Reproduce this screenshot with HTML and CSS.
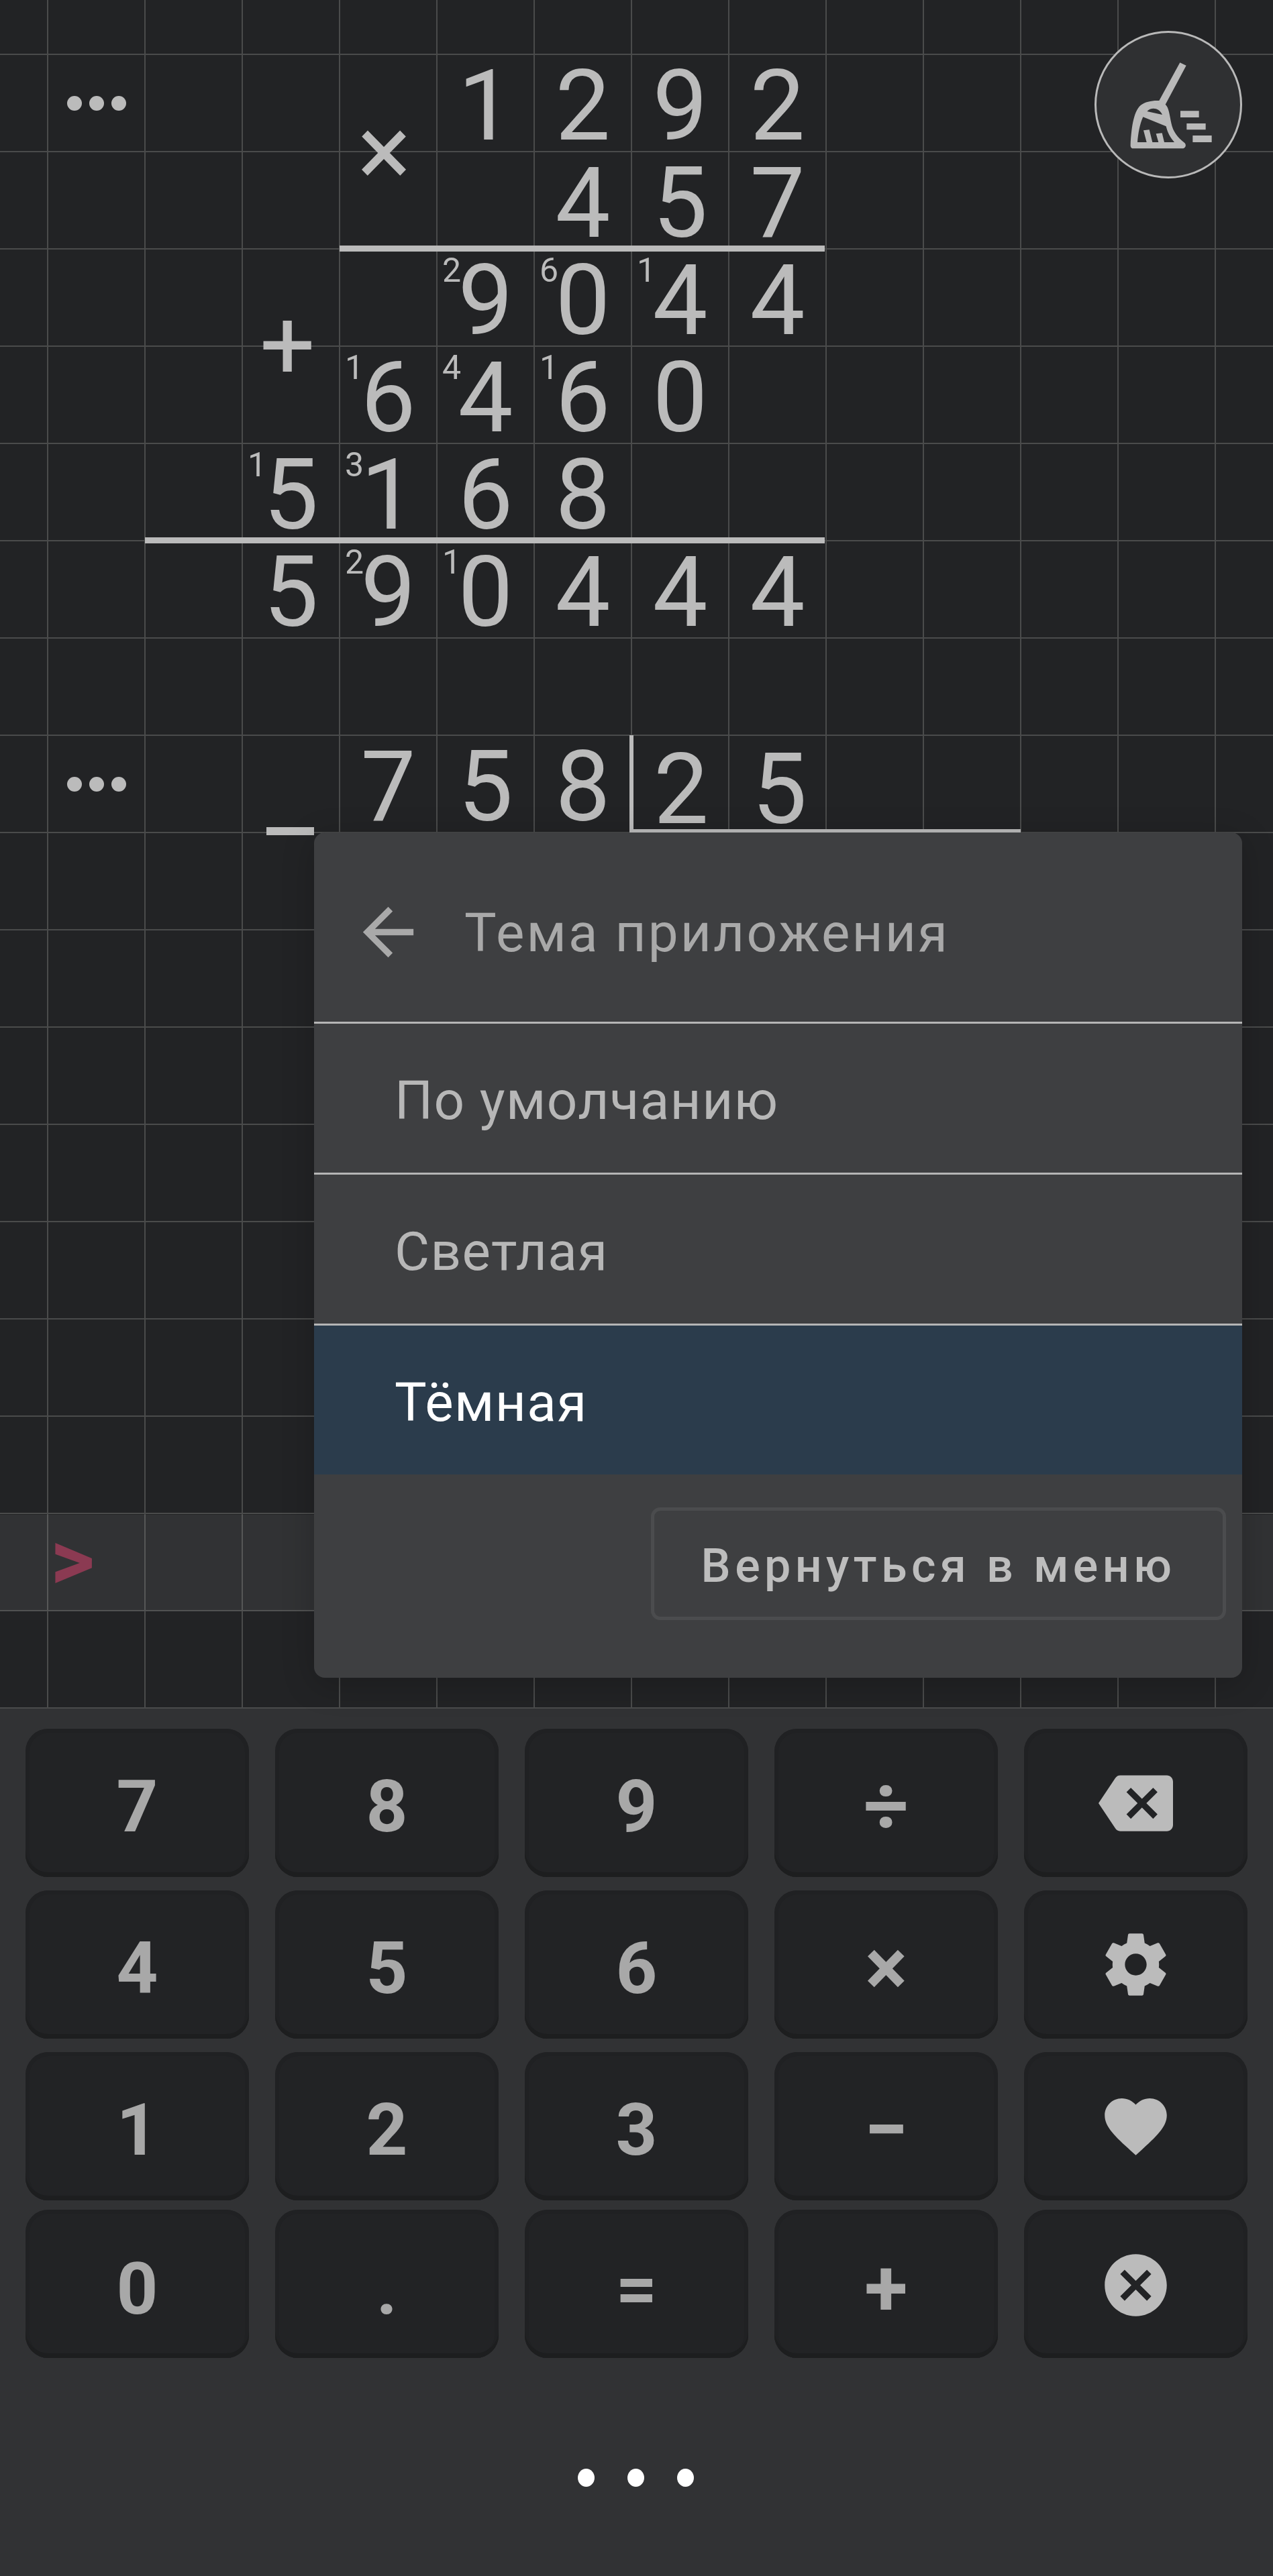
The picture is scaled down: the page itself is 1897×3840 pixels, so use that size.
FILE: index.html
```html
<!DOCTYPE html>
<html lang="en">

<head>
    <meta charset="UTF-8">
    <meta name="viewport" content="width=device-width, initial-scale=1.0">
    <title>Столбик</title>
    <link rel="stylesheet" href="styles.css">
</head>

<body>
    <div class="app">
        <div class="board">
            <span class="input-band"></span>

            <span class="more c1 r1"><i></i><i></i><i></i></span>
            <span class="sign times c4 r1">×</span>
            <span class="num c5 r1">1</span>
            <span class="num c6 r1">2</span>
            <span class="num c7 r1">9</span>
            <span class="num c8 r1">2</span>
            <span class="num c6 r2">4</span>
            <span class="num c7 r2">5</span>
            <span class="num c8 r2">7</span>
            <span class="rule rule-mul"></span>

            <span class="num c5 r3">9<sup>2</sup></span>
            <span class="num c6 r3">0<sup>6</sup></span>
            <span class="num c7 r3">4<sup>1</sup></span>
            <span class="num c8 r3">4</span>

            <span class="sign plus c3 r3">+</span>
            <span class="num c4 r4">6<sup>1</sup></span>
            <span class="num c5 r4">4<sup>4</sup></span>
            <span class="num c6 r4">6<sup>1</sup></span>
            <span class="num c7 r4">0</span>

            <span class="num c3 r5">5<sup>1</sup></span>
            <span class="num c4 r5">1<sup>3</sup></span>
            <span class="num c5 r5">6</span>
            <span class="num c6 r5">8</span>
            <span class="rule rule-add"></span>

            <span class="num c3 r6">5</span>
            <span class="num c4 r6">9<sup>2</sup></span>
            <span class="num c5 r6">0<sup>1</sup></span>
            <span class="num c6 r6">4</span>
            <span class="num c7 r6">4</span>
            <span class="num c8 r6">4</span>

            <span class="more c1 r8"><i></i><i></i><i></i></span>
            <span class="minus-mark"></span>
            <span class="num c4 r8">7</span>
            <span class="num c5 r8">5</span>
            <span class="num c6 r8">8</span>
            <span class="divisor">
                <span class="num">2</span>
                <span class="num">5</span>
            </span>

            <span class="prompt">&gt;</span>

            <button class="clean-button">
                <svg viewBox="0 0 600 570" class="broom">
                    <path fill-rule="evenodd" d="M262 270 L355 100 L383 113 L290 287 C305 300 308 330 316 370 C324 410 345 435 375 458 C386 468 380 484 365 484 L145 484 C136 484 133 476 134 465 C138 400 145 320 180 290 C200 274 235 268 262 270 Z M208 318 C225 298 262 300 276 333 Z M190 343 L293 385 C300 415 312 435 330 456 L285 456 L275 415 L248 418 L259 456 L232 456 L218 400 L192 403 L206 456 L165 456 C168 420 175 375 190 343 Z" />
                    <path d="M357 316 H440 V345 H357 Z M385 372 H470 V400 H385 Z M412 426 H497 V456 H412 Z" />
                </svg>
            </button>
        </div>

        <div class="keypad">
            <button class="key">7</button>
            <button class="key">8</button>
            <button class="key">9</button>
            <button class="key op">÷</button>
            <button class="key">
                <svg viewBox="0 0 24 24" class="key-icon icon-back">
                    <path d="M22 3H7c-.69 0-1.23.35-1.59.88L0 12l5.41 8.11c.36.53.9.89 1.59.89h15c1.1 0 2-.9 2-2V5c0-1.1-.9-2-2-2zm-3 12.59L17.59 17 14 13.41 10.41 17 9 15.59 12.59 12 9 8.41 10.41 7 14 10.59 17.59 7 19 8.41 15.41 12 19 15.59z" />
                </svg>
            </button>
            <button class="key">4</button>
            <button class="key">5</button>
            <button class="key">6</button>
            <button class="key op">×</button>
            <button class="key">
                <svg viewBox="0 0 24 24" class="key-icon">
                    <path d="M19.43 12.98c.04-.32.07-.64.07-.98s-.03-.66-.07-.98l2.11-1.65c.19-.15.24-.42.12-.64l-2-3.46c-.12-.22-.39-.3-.61-.22l-2.49 1c-.52-.4-1.08-.73-1.69-.98l-.38-2.65C14.46 2.18 14.25 2 14 2h-4c-.25 0-.46.18-.49.42l-.38 2.65c-.61.25-1.17.59-1.69.98l-2.49-1c-.23-.09-.49 0-.61.22l-2 3.46c-.13.22-.07.49.12.64l2.11 1.65c-.04.32-.07.65-.07.98s.03.66.07.98l-2.11 1.65c-.19.15-.24.42-.12.64l2 3.46c.12.22.39.3.61.22l2.49-1c.52.4 1.08.73 1.69.98l.38 2.65c.03.24.24.42.49.42h4c.25 0 .46-.18.49-.42l.38-2.65c.61-.25 1.17-.59 1.69-.98l2.49 1c.23.09.49 0 .61-.22l2-3.46c.12-.22.07-.49-.12-.64l-2.11-1.65zM12 15.5c-1.93 0-3.5-1.57-3.5-3.5s1.57-3.5 3.5-3.5 3.5 1.57 3.5 3.5-1.57 3.5-3.5 3.5z" />
                </svg>
            </button>
            <button class="key">1</button>
            <button class="key">2</button>
            <button class="key">3</button>
            <button class="key op">−</button>
            <button class="key">
                <svg viewBox="0 0 24 24" class="key-icon">
                    <path d="M12 21.35l-1.45-1.32C5.4 15.36 2 12.28 2 8.5 2 5.42 4.42 3 7.5 3c1.74 0 3.41.81 4.5 2.09C13.09 3.81 14.76 3 16.5 3 19.58 3 22 5.42 22 8.5c0 3.78-3.4 6.86-8.55 11.54L12 21.35z" />
                </svg>
            </button>
            <button class="key last">0</button>
            <button class="key last">.</button>
            <button class="key last">=</button>
            <button class="key last op">+</button>
            <button class="key last">
                <svg viewBox="0 0 24 24" class="key-icon">
                    <path d="M12 2C6.47 2 2 6.47 2 12s4.47 10 10 10 10-4.47 10-10S17.53 2 12 2zm5 13.59L15.59 17 12 13.41 8.41 17 7 15.59 10.59 12 7 8.41 8.41 7 12 10.59 15.59 7 17 8.41 13.41 12 17 15.59z" />
                </svg>
            </button>
        </div>

        <div class="pager">
            <i></i><i></i><i></i>
        </div>

        <div class="modal">
            <div class="modal-head">
                <svg viewBox="0 0 24 24" class="back-arrow">
                    <path d="M20 11H7.83l5.59-5.59L12 4l-8 8 8 8 1.41-1.41L7.83 13H20v-2z" />
                </svg>
                <span class="modal-title">Тема приложения</span>
            </div>
            <div class="option">По умолчанию</div>
            <div class="option">Светлая</div>
            <div class="option selected">Тёмная</div>
            <div class="modal-foot">
                <button class="menu-button">Вернуться в меню</button>
            </div>
        </div>
    </div>
</body>

</html>
```

FILE: styles.css
```css
* {
    box-sizing: border-box;
}

body {
    margin: 0;
    background-color: #313234;
    font-family: Roboto, "Noto Sans", sans-serif;
}

button {
    font-family: inherit;
    border: none;
    padding: 0;
}

.app {
    position: relative;
    width: 1897px;
    height: 3840px;
    overflow: hidden;
}

/* grid paper: every cell is 145px, first lines at x=71 and y=81 */
.board {
    position: relative;
    height: 2547px;
    display: grid;
    grid-template-columns: 71px repeat(13, 145px) 1fr;
    grid-template-rows: 81px repeat(17, 145px);
    background-color: #222325;
    background-image:
        linear-gradient(to right, #4a4b4b 2px, transparent 2px),
        linear-gradient(to bottom, #4a4b4b 2px, transparent 2px);
    background-size: 145px 145px;
    background-position: 70px 0, 0 80px;
}

.c1 { grid-column: 2; }
.c3 { grid-column: 4; }
.c4 { grid-column: 5; }
.c5 { grid-column: 6; }
.c6 { grid-column: 7; }
.c7 { grid-column: 8; }
.c8 { grid-column: 9; }

.r1 { grid-row: 2; }
.r2 { grid-row: 3; }
.r3 { grid-row: 4; }
.r4 { grid-row: 5; }
.r5 { grid-row: 6; }
.r6 { grid-row: 7; }
.r8 { grid-row: 9; }

.num {
    position: relative;
    display: flex;
    align-items: center;
    justify-content: center;
    padding-top: 9px;
    font-size: 146px;
    line-height: 145px;
    color: #bbbbbb;
}

.num sup {
    position: absolute;
    left: 8px;
    top: -3px;
    font-size: 50px;
    line-height: 70px;
    vertical-align: baseline;
}

.sign {
    display: flex;
    align-items: center;
    justify-content: center;
    color: #bbbbbb;
    line-height: 1;
}

.times {
    grid-row: 2 / span 2;
    font-size: 150px;
    transform: translateX(-6px);
}

.plus {
    grid-row: 4 / span 2;
    font-size: 146px;
    transform: translateX(-5px);
}

.more {
    display: flex;
    align-items: center;
    justify-content: center;
    gap: 11px;
}

.more i {
    width: 22px;
    height: 22px;
    border-radius: 50%;
    background-color: #bbbbbb;
}

.rule {
    grid-column: 5 / 10;
    height: 9px;
    margin-top: -5px;
    margin-right: 2px;
    background-color: #bbbbbb;
    z-index: 1;
}

.rule-mul {
    grid-row: 4;
}

.rule-add {
    grid-column: 3 / 10;
    grid-row: 7;
}

.minus-mark {
    grid-column: 4;
    grid-row: 9;
    align-self: end;
    justify-self: center;
    width: 71px;
    height: 12px;
    margin-bottom: -4px;
    transform: translateX(-1px);
    background-color: #bbbbbb;
}

.divisor {
    grid-column: 8 / 12;
    grid-row: 9;
    display: grid;
    grid-template-columns: repeat(4, 145px);
    margin-left: -3px;
    border-left: 6px solid #bbbbbb;
    border-bottom: 5px solid #bbbbbb;
}

.divisor .num:first-child {
    margin-left: -3px;
}

.input-band {
    grid-column: 1 / -1;
    grid-row: 17;
    margin-top: 2px;
    background-color: rgba(255, 255, 255, 0.07);
}

.prompt {
    grid-column: 1 / 3;
    grid-row: 17;
    padding-left: 75px;
    font-size: 128px;
    font-weight: 700;
    line-height: 138px;
    color: #8b3a52;
}

.clean-button {
    position: absolute;
    left: 1631px;
    top: 46px;
    width: 220px;
    height: 220px;
    display: flex;
    align-items: center;
    justify-content: center;
    background-color: #2f3032;
    border: 3px solid #b9b9b9;
    border-radius: 50%;
}

.broom {
    width: 200px;
    height: 190px;
    flex-shrink: 0;
    fill: #b9b9b9;
    transform: translate(-1px, -1px);
}

.keypad {
    display: grid;
    grid-template-columns: repeat(5, 1fr);
    grid-auto-rows: 221px;
    column-gap: 39px;
    row-gap: 20px;
    padding: 30px 38px 0;
}

.key {
    display: flex;
    align-items: center;
    justify-content: center;
    padding-top: 10px;
    font-size: 108px;
    font-weight: 700;
    color: #a8a8a8;
    background-color: #222325;
    border-radius: 34px;
    box-shadow: inset 0 -7px 0 #1d1e1f, inset 0 0 0 6px #202123;
}

.key.op {
    font-size: 118px;
}

.key.last {
    margin-top: -6px;
    margin-bottom: 6px;
    padding-top: 14px;
}

.key-icon {
    width: 111px;
    height: 111px;
    margin-top: -10px;
    fill: #bbbbbb;
}

.icon-back {
    height: 112px;
}

.pager {
    display: flex;
    justify-content: center;
    gap: 49px;
    padding-top: 159px;
    padding-right: 3px;
}

.pager i {
    width: 25px;
    height: 27px;
    border-radius: 50%;
    background-color: #ffffff;
}

/* the dialog lies over the board */
.modal {
    position: absolute;
    left: 468px;
    top: 1241px;
    width: 1383px;
    height: 1260px;
    background-color: #3e3f41;
    border-radius: 16px;
    box-shadow: 0 10px 50px rgba(0, 0, 0, 0.2);
    overflow: hidden;
}

.modal-head {
    display: flex;
    align-items: center;
    height: 285px;
    padding: 14px 0 0 54px;
    gap: 57px;
    font-size: 80px;
    letter-spacing: 3.1px;
    color: #a9a9a9;
    border-bottom: 3px solid #b5b5b5;
}

.modal-title {
    padding-top: 4px;
}

.back-arrow {
    width: 113px;
    height: 113px;
    fill: #a9a9a9;
}

.option {
    display: flex;
    align-items: center;
    height: 225px;
    padding: 8px 0 0 120px;
    font-size: 80px;
    letter-spacing: 1.4px;
    color: #b7b7b7;
    border-bottom: 3px solid #b5b5b5;
}

.option.selected {
    height: 222px;
    color: #ffffff;
    background-color: #2b3c4c;
    border-bottom: none;
}

.modal-foot {
    display: flex;
    justify-content: flex-end;
    padding: 49px 24px 0 0;
}

.menu-button {
    width: 857px;
    height: 168px;
    padding-top: 5px;
    font-size: 70px;
    font-weight: 500;
    letter-spacing: 6.4px;
    color: #bdbdbd;
    background-color: transparent;
    border: 5px solid #4b4c4e;
    border-radius: 14px;
}
```
